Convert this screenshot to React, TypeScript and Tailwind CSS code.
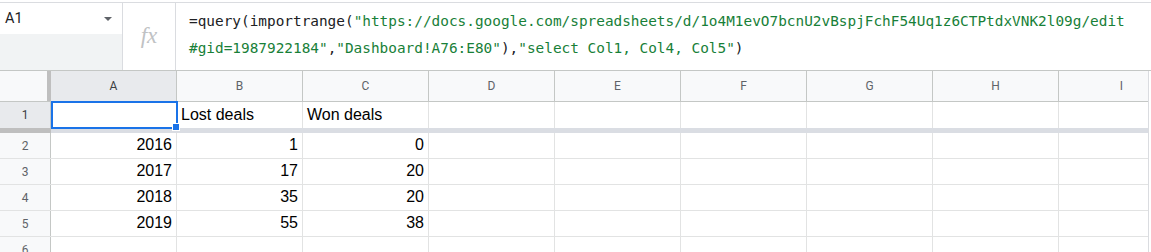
import React from 'react';

const cols = ['A', 'B', 'C', 'D', 'E', 'F', 'G', 'H', 'I'];

// rows of data: [A, B, C]
const rows: { n: number; cells: (string | number)[] }[] = [
  { n: 2, cells: [2016, 1, 0] },
  { n: 3, cells: [2017, 17, 20] },
  { n: 4, cells: [2018, 35, 20] },
  { n: 5, cells: [2019, 55, 38] },
  { n: 6, cells: [] },
];

const mono = { fontFamily: '"DejaVu Sans Mono", "Liberation Mono", monospace' };

const FormulaBar: React.FC = () => (
  <div className="flex h-[68px] border-b border-[#c4c7c5] bg-white">
    <div className="flex w-[123px] flex-col border-r border-[#dadce0]">
      <div className="flex h-[31px] items-center justify-between bg-white pl-[5px] pr-[10px]">
        <span className="text-[14.5px] text-[#202124]" style={{ fontFamily: 'Roboto, sans-serif' }}>
          A1
        </span>
        <span className="h-0 w-0 border-x-[4px] border-t-[4px] border-x-transparent border-t-[#5f6368]" />
      </div>
      <div className="flex-1 bg-[#f1f3f4]" />
    </div>
    <div className="flex w-[53px] items-center justify-center border-r border-[#dadce0]">
      <span className="text-[23px] italic text-[#c0c2c4]" style={{ fontFamily: '"Liberation Serif", serif' }}>
        fx
      </span>
    </div>
    <div className="flex-1 pl-[13px] pt-[5px] text-[14.4px] leading-[27px] whitespace-pre text-[#202124]" style={mono}>
      <div>
        =query(importrange(
        <span className="text-[#188038]">"https://docs.google.com/spreadsheets/d/1o4M1evO7bcnU2vBspjFchF54Uq1z6CTPtdxVNK2l09g/edit</span>
      </div>
      <div>
        <span className="text-[#188038]">#gid=1987922184"</span>,
        <span className="text-[#188038]">"Dashboard!A76:E80"</span>),
        <span className="text-[#188038]">"select Col1, Col4, Col5"</span>)
      </div>
    </div>
  </div>
);

const Cell: React.FC<{ value?: string | number; left?: boolean }> = ({ value, left }) => (
  <div
    className={`flex h-full w-[126px] shrink-0 items-end border-r border-[#e2e3e3] px-[4px] pb-[1px] text-[16px] text-[#000] ${
      left ? 'justify-start' : 'justify-end'
    }`}
  >
    {value}
  </div>
);

const App: React.FC = () => {
  return (
    <div
      className="relative h-[252px] w-[1151px] overflow-hidden bg-white pt-[2px]"
      style={{ fontFamily: '"Liberation Sans", Arial, sans-serif' }}
    >
      <div className="border-t border-[#dadce0]">
        <FormulaBar />
      </div>

      {/* column headers */}
      <div className="flex h-[31px] border-b border-[#c4c7c5] text-[12px] text-[#5f6368]" style={{ fontFamily: 'Roboto, sans-serif' }}>
        <div className="flex w-[51px] shrink-0">
          <div className="w-[47px] bg-[#f8f9fa]" />
          <div className="w-[4px] bg-[#bfbfbf]" />
        </div>
        {cols.map((c, i) => (
          <div
            key={c}
            className={`flex w-[126px] shrink-0 items-center justify-center border-r border-[#c4c7c5] ${
              i === 0 ? 'bg-[#e8eaed] text-[#3c4043]' : 'bg-[#f8f9fa]'
            }`}
          >
            {c}
          </div>
        ))}
      </div>

      {/* frozen row 1 */}
      <div className="relative flex h-[26px]">
        <div
          className="flex w-[51px] shrink-0 items-center justify-center border-r border-[#c4c7c5] bg-[#e8eaed] text-[12px] text-[#3c4043]"
          style={{ fontFamily: 'Roboto, sans-serif' }}
        >
          1
        </div>
        <Cell />
        <Cell value="Lost deals" left />
        <Cell value="Won deals" left />
        {cols.slice(3).map((c) => (
          <Cell key={c} />
        ))}
        {/* selection around A1 */}
        <div className="pointer-events-none absolute left-[51px] top-[-1px] h-[28px] w-[127px] border-2 border-[#1a73e8]" />
        <div className="pointer-events-none absolute left-[172px] top-[21px] h-[8px] w-[8px] border border-white bg-[#1a73e8]" />
      </div>

      {/* frozen separator */}
      <div className="flex h-[5px]">
        <div className="w-[51px] shrink-0 bg-[#bfbfbf]" />
        <div className="flex-1 bg-[#dadde3]" />
      </div>

      {rows.map((r) => (
        <div key={r.n} className="flex h-[26px] border-b border-[#e2e3e3]">
          <div
            className="flex w-[51px] shrink-0 items-center justify-center border-r border-[#c4c7c5] bg-[#f8f9fa] text-[12px] text-[#5f6368]"
            style={{ fontFamily: 'Roboto, sans-serif' }}
          >
            {r.n}
          </div>
          {cols.map((c, i) => (
            <Cell key={c} value={r.cells[i]} />
          ))}
        </div>
      ))}

      {/* vertical scrollbar edge */}
      <div className="pointer-events-none absolute left-[1148px] top-[71px] bottom-0 w-[3px] border-l border-[#dadce0] bg-white" />
    </div>
  );
};

export default App;
